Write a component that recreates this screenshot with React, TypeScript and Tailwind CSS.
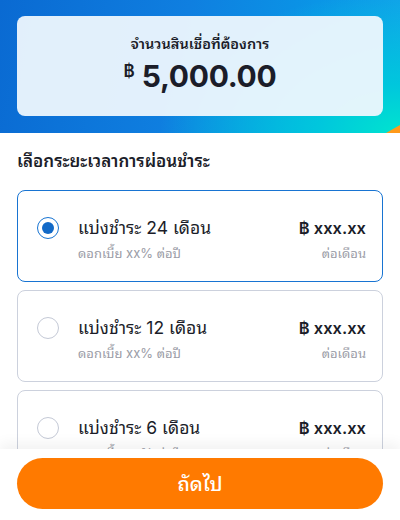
import { useState } from "react";

const plans = [
  { months: 24, rate: "xx%", amount: "xxx.xx" },
  { months: 12, rate: "xx%", amount: "xxx.xx" },
  { months: 6, rate: "xx%", amount: "xxx.xx" },
];

export default function App() {
  const [selected, setSelected] = useState(24);

  return (
    <div
      className="relative h-[520px] w-[400px] overflow-hidden bg-white text-[#1b1d29]"
      style={{ fontFamily: '"Inter", "Noto Sans Thai Looped", "Noto Sans Thai", "Noto Sans", sans-serif' }}
    >
      <div className="relative h-[133px] overflow-hidden bg-[radial-gradient(ellipse_240px_140px_at_100%_100%,#00e4cf_0%,#00c6dd_35%,rgba(0,160,230,0)_100%),linear-gradient(100deg,#0a6ad2_0%,#0f7fe0_45%,#0a95e6_75%,#12a6ea_100%)] px-[17px] pt-4">
        <div className="absolute bottom-0 right-0 h-0 w-0 border-b-[8px] border-l-[14px] border-b-[#ff9a1a] border-l-transparent" />
        <div className="relative flex h-[100px] flex-col items-center justify-center rounded-[8px] bg-[#eef7fd]/95 pb-[4px]">
          <div className="text-[14.5px] font-semibold leading-5">จำนวนสินเชื่อที่ต้องการ</div>
          <div className="mt-[4px] flex items-start gap-[7px]">
            <span className="mt-[3px] text-[17px] font-semibold leading-5">฿</span>
            <span className="text-[30px] font-bold leading-9 tracking-[-0.3px]">5,000.00</span>
          </div>
        </div>
      </div>

      <div className="px-[17px] pt-[16px]">
        <h2 className="text-[17px] font-semibold leading-6">เลือกระยะเวลาการผ่อนชำระ</h2>
        <div className="mt-[17px] flex flex-col gap-[8px]">
          {plans.map((p) => {
            const active = selected === p.months;
            return (
              <button
                key={p.months}
                type="button"
                onClick={() => setSelected(p.months)}
                className={`flex h-[92px] w-full items-start rounded-[8px] border-[1.5px] bg-white pl-[19px] pr-[16px] pt-[25px] text-left ${
                  active ? "border-[#1874d2]" : "border-[#ccd1dd]"
                }`}
              >
                <div
                  className={`mt-[1px] flex h-[22px] w-[22px] shrink-0 items-center justify-center rounded-full border-[1.5px] ${
                    active ? "border-[#1874d2]" : "border-[#c4c9d6]"
                  }`}
                >
                  {active ? <div className="h-[12px] w-[12px] rounded-full bg-[#1269c7]" /> : null}
                </div>
                <div className="ml-[19px] flex-1">
                  <div className="text-[17.5px] leading-6">แบ่งชำระ {p.months} เดือน</div>
                  <div className="mt-[3px] text-[13px] leading-5 text-[#9a9ca6]">ดอกเบี้ย {p.rate} ต่อปี</div>
                </div>
                <div className="text-right">
                  <div className="text-[16.5px] font-semibold leading-6">฿ {p.amount}</div>
                  <div className="mt-[3px] text-[13px] leading-5 text-[#9a9ca6]">ต่อเดือน</div>
                </div>
              </button>
            );
          })}
        </div>
      </div>

      <div className="absolute inset-x-0 bottom-0 h-[71px] bg-white px-[17px] pt-[9px] shadow-[0_-6px_12px_rgba(0,0,0,0.05)]">
        <button
          type="button"
          className="h-[51px] w-full rounded-full bg-[#ff7a00] text-[20px] font-medium text-white"
        >
          ถัดไป
        </button>
      </div>
    </div>
  );
}
